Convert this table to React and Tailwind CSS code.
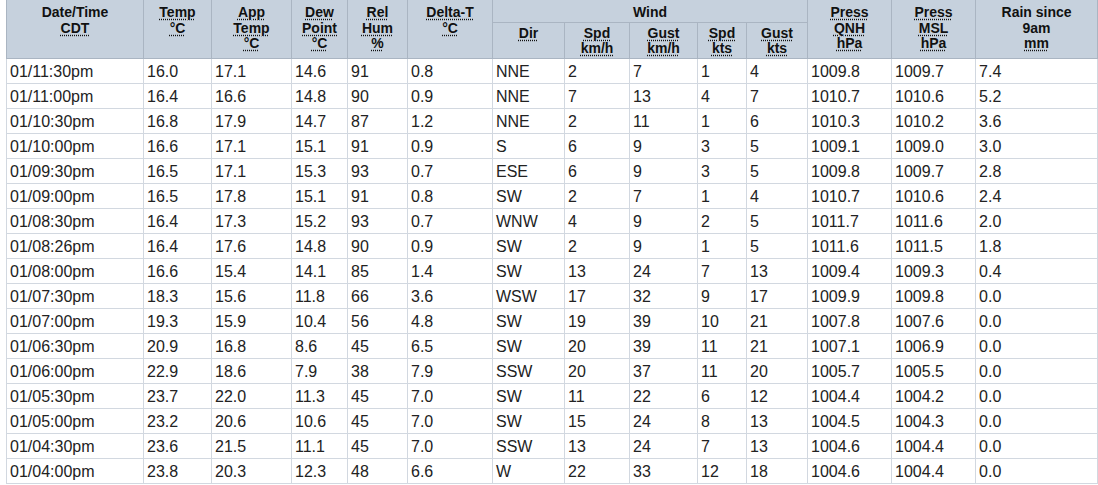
import React from 'react';

// obs rows, newest first
const rows = [
  ['01/11:30pm', '16.0', '17.1', '14.6', '91', '0.8', 'NNE', '2', '7', '1', '4', '1009.8', '1009.7', '7.4'],
  ['01/11:00pm', '16.4', '16.6', '14.8', '90', '0.9', 'NNE', '7', '13', '4', '7', '1010.7', '1010.6', '5.2'],
  ['01/10:30pm', '16.8', '17.9', '14.7', '87', '1.2', 'NNE', '2', '11', '1', '6', '1010.3', '1010.2', '3.6'],
  ['01/10:00pm', '16.6', '17.1', '15.1', '91', '0.9', 'S', '6', '9', '3', '5', '1009.1', '1009.0', '3.0'],
  ['01/09:30pm', '16.5', '17.1', '15.3', '93', '0.7', 'ESE', '6', '9', '3', '5', '1009.8', '1009.7', '2.8'],
  ['01/09:00pm', '16.5', '17.8', '15.1', '91', '0.8', 'SW', '2', '7', '1', '4', '1010.7', '1010.6', '2.4'],
  ['01/08:30pm', '16.4', '17.3', '15.2', '93', '0.7', 'WNW', '4', '9', '2', '5', '1011.7', '1011.6', '2.0'],
  ['01/08:26pm', '16.4', '17.6', '14.8', '90', '0.9', 'SW', '2', '9', '1', '5', '1011.6', '1011.5', '1.8'],
  ['01/08:00pm', '16.6', '15.4', '14.1', '85', '1.4', 'SW', '13', '24', '7', '13', '1009.4', '1009.3', '0.4'],
  ['01/07:30pm', '18.3', '15.6', '11.8', '66', '3.6', 'WSW', '17', '32', '9', '17', '1009.9', '1009.8', '0.0'],
  ['01/07:00pm', '19.3', '15.9', '10.4', '56', '4.8', 'SW', '19', '39', '10', '21', '1007.8', '1007.6', '0.0'],
  ['01/06:30pm', '20.9', '16.8', '8.6', '45', '6.5', 'SW', '20', '39', '11', '21', '1007.1', '1006.9', '0.0'],
  ['01/06:00pm', '22.9', '18.6', '7.9', '38', '7.9', 'SSW', '20', '37', '11', '20', '1005.7', '1005.5', '0.0'],
  ['01/05:30pm', '23.7', '22.0', '11.3', '45', '7.0', 'SW', '11', '22', '6', '12', '1004.4', '1004.2', '0.0'],
  ['01/05:00pm', '23.2', '20.6', '10.6', '45', '7.0', 'SW', '15', '24', '8', '13', '1004.5', '1004.3', '0.0'],
  ['01/04:30pm', '23.6', '21.5', '11.1', '45', '7.0', 'SSW', '13', '24', '7', '13', '1004.6', '1004.4', '0.0'],
  ['01/04:00pm', '23.8', '20.3', '12.3', '48', '6.6', 'W', '22', '33', '12', '18', '1004.6', '1004.4', '0.0'],
];

const widths = [137, 68, 80, 56, 60, 85, 72, 65, 68, 49, 61, 84, 84, 122];

// header cell lines, each line wrapped in abbr unless plain
const Ab = ({ children }) => (
  <abbr title={String(children)} className="underline decoration-dotted underline-offset-2">
    {children}
  </abbr>
);

const thTop = 'align-top text-center font-bold border-x border-b border-[#aab5c2] pt-[5px] px-[2px]';
const thSub = 'align-top text-center font-bold border-x border-b border-[#aab5c2] pt-[3px] px-[2px]';

const App = () => {
  return (
    <div className="bg-white min-h-screen pl-[6px] font-['Liberation_Sans',Arial,sans-serif] text-[#222]">
      <table className="table-fixed border-collapse w-[1091px]">
        <colgroup>
          {widths.map((w, i) => (
            <col key={i} style={{ width: w }} />
          ))}
        </colgroup>
        <thead className="bg-[#c6d1dd] text-[14px] leading-[15.5px] text-[#111]">
          <tr className="h-[22px]">
            <th rowSpan={2} className={thTop}>
              Date/Time<br /><Ab>CDT</Ab>
            </th>
            <th rowSpan={2} className={thTop}>
              <Ab>Temp</Ab><br /><Ab>°C</Ab>
            </th>
            <th rowSpan={2} className={thTop}>
              <Ab>App</Ab><br /><Ab>Temp</Ab><br /><Ab>°C</Ab>
            </th>
            <th rowSpan={2} className={thTop}>
              <Ab>Dew</Ab><br /><Ab>Point</Ab><br /><Ab>°C</Ab>
            </th>
            <th rowSpan={2} className={thTop}>
              <Ab>Rel</Ab><br /><Ab>Hum</Ab><br /><Ab>%</Ab>
            </th>
            <th rowSpan={2} className={thTop}>
              <Ab>Delta-T</Ab><br /><Ab>°C</Ab>
            </th>
            <th colSpan={5} className={thTop}>Wind</th>
            <th rowSpan={2} className={thTop}>
              <Ab>Press</Ab><br /><Ab>QNH</Ab><br /><Ab>hPa</Ab>
            </th>
            <th rowSpan={2} className={thTop}>
              <Ab>Press</Ab><br /><Ab>MSL</Ab><br /><Ab>hPa</Ab>
            </th>
            <th rowSpan={2} className={thTop}>
              Rain since<br />9am<br /><Ab>mm</Ab>
            </th>
          </tr>
          <tr className="h-[36px]">
            <th className={thSub}><Ab>Dir</Ab></th>
            <th className={thSub}><Ab>Spd</Ab><br /><Ab>km/h</Ab></th>
            <th className={thSub}><Ab>Gust</Ab><br /><Ab>km/h</Ab></th>
            <th className={thSub}><Ab>Spd</Ab><br /><Ab>kts</Ab></th>
            <th className={thSub}><Ab>Gust</Ab><br /><Ab>kts</Ab></th>
          </tr>
        </thead>
        <tbody className="text-[16px] leading-[18px]">
          {rows.map((r) => (
            <tr key={r[0]} className="h-[25px]">
              {r.map((v, i) => (
                <td key={i} className="border border-[#d2d8e0] pl-[3px] pt-[4px] pb-[2px] whitespace-nowrap">
                  {v}
                </td>
              ))}
            </tr>
          ))}
        </tbody>
      </table>
    </div>
  );
};

export default App;
